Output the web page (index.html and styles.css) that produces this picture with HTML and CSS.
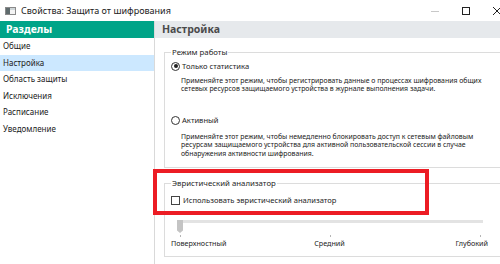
FILE: index.html
```html
<!DOCTYPE html>
<html lang="ru">
<head>
    <meta charset="UTF-8">
    <title>Свойства: Защита от шифрования</title>
    <link rel="stylesheet" href="styles.css">
</head>
<body>
    <div class="window">
        <div class="titlebar">
            <svg class="app-icon" width="11" height="8" viewBox="0 0 11 8">
                <rect x="0.5" y="0.5" width="10" height="7" fill="#f4f4f4" stroke="#8a8a8a"/>
                <rect x="1" y="1" width="4" height="6" fill="#5f6b6d"/>
                <rect x="5" y="1" width="5" height="2" fill="#cfd6d8"/>
            </svg>
            <span class="title">Свойства: Защита от шифрования</span>
            <div class="controls">
                <span class="ctl"><svg width="8" height="8" viewBox="0 0 8 8"><path d="M0 4.5h8" stroke="#c8c8c8"/></svg></span>
                <span class="ctl"><svg width="8" height="8" viewBox="0 0 8 8"><rect x="0.5" y="0.5" width="7" height="7" fill="none" stroke="#222"/></svg></span>
                <span class="ctl"><svg width="8" height="8" viewBox="0 0 8 8"><path d="M0 0L8 8M8 0L0 8" stroke="#222"/></svg></span>
            </div>
        </div>

        <div class="main">
            <div class="sidebar">
                <div class="side-head">Разделы</div>
                <div class="side-item">Общие</div>
                <div class="side-item active">Настройка</div>
                <div class="side-item">Область защиты</div>
                <div class="side-item">Исключения</div>
                <div class="side-item">Расписание</div>
                <div class="side-item">Уведомление</div>
            </div>

            <div class="content">
                <div class="content-head">Настройка</div>

                <fieldset class="group mode">
                    <legend>Режим работы</legend>
                    <div class="option">
                        <span class="radio checked"></span>
                        <span>Только статистика</span>
                    </div>
                    <p class="desc">Применяйте этот режим, чтобы регистрировать данные о процессах шифрования общих<br>сетевых ресурсов защищаемого устройства в журнале выполнения задачи.</p>
                    <div class="option second">
                        <span class="radio"></span>
                        <span>Активный</span>
                    </div>
                    <p class="desc later">Применяйте этот режим, чтобы немедленно блокировать доступ к сетевым файловым<br>ресурсам защищаемого устройства для активной пользовательской сессии в случае<br>обнаружения активности шифрования.</p>
                </fieldset>

                <fieldset class="group heuristic">
                    <legend>Эвристический анализатор</legend>
                    <div class="option">
                        <span class="check"></span>
                        <span>Использовать эвристический анализатор</span>
                    </div>
                    <div class="slider">
                        <div class="track"></div>
                        <div class="thumb"></div>
                    </div>
                    <div class="ticks"><i></i><i></i><i></i></div>
                    <div class="levels">
                        <span>Поверхностный</span>
                        <span>Средний</span>
                        <span>Глубокий</span>
                    </div>
                </fieldset>
            </div>
        </div>

        <div class="highlight"></div>
    </div>
</body>
</html>
```

FILE: styles.css
```css
body {
    margin: 0;
    width: 500px;
    height: 264px;
    overflow: hidden;
    background: #fff;
    font-family: 'Noto Sans', 'Open Sans', sans-serif;
    color: #1e1e1e;
}
.window {
    position: relative;
    width: 512px;
    height: 264px;
}
.titlebar {
    height: 21px;
    display: flex;
    align-items: center;
}
.app-icon {
    margin-left: 5px;
    margin-right: 5px;
}
.title {
    font-size: 9px;
    color: #222;
}
.controls {
    margin-left: auto;
    display: flex;
}
.ctl {
    width: 31px;
    height: 21px;
    display: flex;
    align-items: center;
    justify-content: center;
}
.main {
    display: flex;
    height: 243px;
}
.sidebar {
    width: 154px;
    border-right: 1px solid #d9d9d9;
}
.side-head {
    height: 17px;
    line-height: 17px;
    background: #00a488;
    color: #fff;
    font-weight: bold;
    font-size: 10.5px;
    padding-left: 6px;
}
.side-item {
    height: 16.5px;
    line-height: 16.5px;
    font-size: 8px;
    padding-left: 3px;
    color: #222;
}
.side-item.active {
    background: #cce8ff;
}
.content {
    flex: 1;
}
.content-head {
    height: 17px;
    line-height: 17px;
    background: #e6e9ec;
    color: #4a4a4a;
    font-weight: bold;
    font-size: 10.5px;
    padding-left: 7px;
}
.group {
    margin: 0 9px;
    padding: 0 6px;
    border: 1px solid #dcdcdc;
    font-size: 7.6px;
    line-height: 9px;
}
.group legend {
    padding: 0 1px;
    font-size: 7.8px;
    line-height: 9px;
}
.mode {
    margin-top: 10px;
    height: 120px;
    box-sizing: border-box;
}
.heuristic {
    margin-top: 11px;
    height: 78px;
    box-sizing: border-box;
}
.option {
    display: flex;
    align-items: center;
    gap: 2px;
    height: 9px;
    margin-top: 4.5px;
}
.option.second {
    margin-top: 22px;
}
.radio {
    width: 7px;
    height: 7px;
    border: 0.7px solid #333;
    border-radius: 50%;
    display: flex;
    align-items: center;
    justify-content: center;
}
.radio.checked::after {
    content: "";
    width: 4px;
    height: 4px;
    border-radius: 50%;
    background: #222;
}
.check {
    width: 7px;
    height: 7px;
    border: 1px solid #444;
    margin-right: 1px;
}
.desc {
    margin: 6px 0 0 10px;
    font-size: 6.9px;
    line-height: 8.5px;
    white-space: nowrap;
    color: #222;
}
.desc.later {
    margin-top: 8px;
}
.heuristic .option {
    margin-top: 8px;
}
.slider {
    position: relative;
    height: 14px;
    margin: 15px 13px 0 6px;
}
.track {
    margin-top: 5px;
    height: 3px;
    background: #e3e3e3;
}
.thumb {
    position: absolute;
    left: 0;
    top: 0;
    width: 6px;
    height: 13px;
    background: #c4c4c4;
    clip-path: polygon(0 0, 100% 0, 100% 80%, 50% 100%, 0 80%);
}
.ticks {
    display: flex;
    justify-content: space-between;
    margin: 1px 15px 0 9px;
    height: 2px;
}
.ticks i {
    width: 1px;
    height: 2px;
    background: #b5b5b5;
}
.levels {
    display: grid;
    grid-template-columns: 1fr auto 1fr;
    margin: 2px 8px 0 0;
    font-size: 7.2px;
}
.levels span:last-child {
    justify-self: end;
}
.highlight {
    position: absolute;
    left: 153px;
    top: 169px;
    width: 268px;
    height: 38px;
    border: 4px solid #ec1c24;
}
```
